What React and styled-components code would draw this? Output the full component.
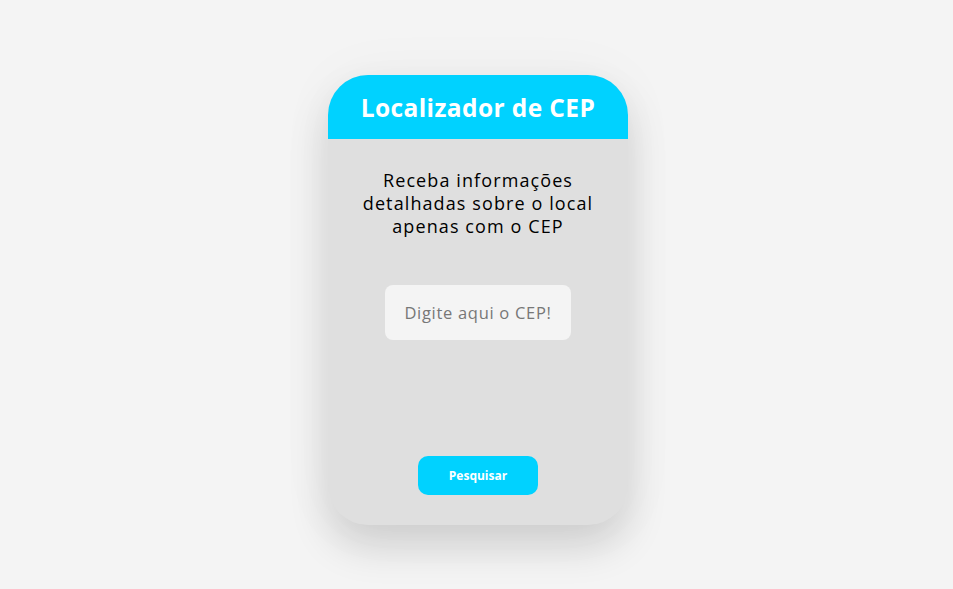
import React from "react";
import styled, { createGlobalStyle } from "styled-components";

const Global = createGlobalStyle`
  html, body { margin: 0; padding: 0; background: #f4f4f4; }
  body { font-family: "Open Sans", "Liberation Sans", sans-serif; }
  * { box-sizing: border-box; }
`;

const Page = styled.div`
  min-height: 589px;
  display: flex;
  justify-content: center;
  align-items: flex-start;
  padding-top: 75px;
  padding-left: 3px;
`;

const Card = styled.div`
  width: 300px;
  height: 450px;
  border-radius: 40px;
  background: #dfdfdf;
  overflow: hidden;
  display: flex;
  flex-direction: column;
  align-items: center;
  box-shadow: 0 22px 40px rgba(0, 0, 0, 0.14), 0 0 60px rgba(0, 0, 0, 0.04);
`;

const Header = styled.div`
  width: 100%;
  height: 64px;
  background: #00d2ff;
  display: flex;
  align-items: center;
  justify-content: center;
`;

const Title = styled.h1`
  margin: 0;
  color: #fff;
  font-size: 24.5px;
  font-weight: 700;
  letter-spacing: 0.4px;
`;

const Description = styled.p`
  margin: 30px 0 0;
  width: 260px;
  text-align: center;
  font-size: 18px;
  line-height: 23px;
  letter-spacing: 1.1px;
  color: #000;
`;

const Input = styled.input`
  margin-top: 47px;
  width: 186px;
  height: 55px;
  border: none;
  border-radius: 8px;
  background: #f4f4f4;
  text-align: center;
  font-family: inherit;
  font-size: 16.5px;
  letter-spacing: 0.7px;
  outline: none;
  &::placeholder { color: #777; }
`;

const Button = styled.button`
  margin-top: auto;
  margin-bottom: 30px;
  width: 120px;
  height: 39px;
  border: none;
  border-radius: 10px;
  background: #00d2ff;
  color: #fff;
  font-family: inherit;
  font-weight: 700;
  font-size: 12px;
  cursor: pointer;
`;

export default function App() {
  return (
    <>
      <Global />
      <Page>
        <Card>
          <Header>
            <Title>Localizador de CEP</Title>
          </Header>
          <Description>Receba informações detalhadas sobre o local apenas com o CEP</Description>
          <Input placeholder="Digite aqui o CEP!" />
          <Button>Pesquisar</Button>
        </Card>
      </Page>
    </>
  );
}
